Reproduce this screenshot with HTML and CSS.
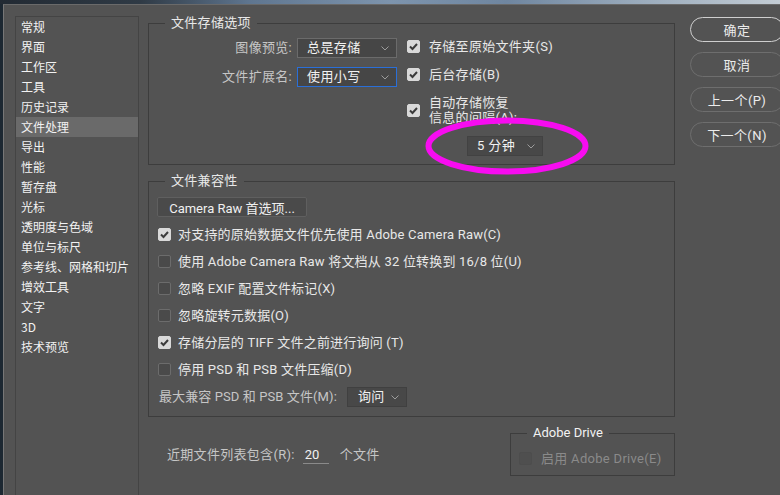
FILE: index.html
```html
<!DOCTYPE html>
<html lang="zh-CN">
<head>
    <meta charset="UTF-8" />
    <title>首选项 - 文件处理</title>
    <link rel="stylesheet" href="styles.css">
</head>
<body>
<div class="wallpaper"></div>
<div class="dialog">
    <ul class="nav">
        <li>常规</li>
        <li>界面</li>
        <li>工作区</li>
        <li>工具</li>
        <li>历史记录</li>
        <li class="active">文件处理</li>
        <li>导出</li>
        <li>性能</li>
        <li>暂存盘</li>
        <li>光标</li>
        <li>透明度与色域</li>
        <li>单位与标尺</li>
        <li>参考线、网格和切片</li>
        <li>增效工具</li>
        <li>文字</li>
        <li>3D</li>
        <li>技术预览</li>
    </ul>

    <div class="main">
        <fieldset class="group group-save">
            <legend>文件存储选项</legend>
            <div class="save-body">
                <div class="save-fields">
                    <span class="field-label">图像预览:</span>
                    <div class="select">
                        <span>总是存储</span>
                        <svg class="chevron" width="8" height="5" viewBox="0 0 8 5"><polyline points="0.5,0.5 4,4 7.5,0.5" /></svg>
                    </div>
                    <span class="field-label">文件扩展名:</span>
                    <div class="select focused">
                        <span>使用小写</span>
                        <svg class="chevron" width="8" height="5" viewBox="0 0 8 5"><polyline points="0.5,0.5 4,4 7.5,0.5" /></svg>
                    </div>
                </div>
                <div class="save-checks">
                    <div class="check">
                        <span class="box on"><svg width="13" height="13" viewBox="0 0 13 13"><path d="M3 6.5 5.5 9 10 4" /></svg></span>
                        <span>存储至原始文件夹(S)</span>
                    </div>
                    <div class="check">
                        <span class="box on"><svg width="13" height="13" viewBox="0 0 13 13"><path d="M3 6.5 5.5 9 10 4" /></svg></span>
                        <span>后台存储(B)</span>
                    </div>
                    <div class="check check-tall">
                        <span class="box on"><svg width="13" height="13" viewBox="0 0 13 13"><path d="M3 6.5 5.5 9 10 4" /></svg></span>
                        <span>自动存储恢复<br>信息的间隔(A):</span>
                    </div>
                    <div class="select select-interval">
                        <span>5 分钟</span>
                        <svg class="chevron" width="8" height="5" viewBox="0 0 8 5"><polyline points="0.5,0.5 4,4 7.5,0.5" /></svg>
                    </div>
                </div>
            </div>
        </fieldset>

        <fieldset class="group group-compat">
            <legend>文件兼容性</legend>
            <button class="raw-btn">Camera Raw 首选项...</button>
            <div class="compat-list">
                <div class="check">
                    <span class="box on"><svg width="13" height="13" viewBox="0 0 13 13"><path d="M3 6.5 5.5 9 10 4" /></svg></span>
                    <span>对支持的原始数据文件优先使用 Adobe Camera Raw(C)</span>
                </div>
                <div class="check">
                    <span class="box"></span>
                    <span>使用 Adobe Camera Raw 将文档从 32 位转换到 16/8 位(U)</span>
                </div>
                <div class="check">
                    <span class="box"></span>
                    <span>忽略 EXIF 配置文件标记(X)</span>
                </div>
                <div class="check">
                    <span class="box"></span>
                    <span>忽略旋转元数据(O)</span>
                </div>
                <div class="check">
                    <span class="box on"><svg width="13" height="13" viewBox="0 0 13 13"><path d="M3 6.5 5.5 9 10 4" /></svg></span>
                    <span>存储分层的 TIFF 文件之前进行询问 (T)</span>
                </div>
                <div class="check">
                    <span class="box"></span>
                    <span>停用 PSD 和 PSB 文件压缩(D)</span>
                </div>
            </div>
            <div class="compat-max">
                <span class="field-label">最大兼容 PSD 和 PSB 文件(M):</span>
                <div class="select select-ask">
                    <span>询问</span>
                    <svg class="chevron" width="8" height="5" viewBox="0 0 8 5"><polyline points="0.5,0.5 4,4 7.5,0.5" /></svg>
                </div>
            </div>
        </fieldset>

        <div class="bottom">
            <div class="recent">
                <span class="field-label">近期文件列表包含(R):</span>
                <span class="num-input">20</span>
                <span class="field-label">个文件</span>
            </div>
            <fieldset class="group group-drive">
                <legend>Adobe Drive</legend>
                <div class="check disabled">
                    <span class="box"></span>
                    <span>启用 Adobe Drive(E)</span>
                </div>
            </fieldset>
        </div>
    </div>

    <div class="actions">
        <button class="pill primary">确定</button>
        <button class="pill">取消</button>
        <button class="pill">上一个(P)</button>
        <button class="pill">下一个(N)</button>
    </div>
</div>

<svg class="annotation" width="170" height="66" viewBox="0 0 170 66">
    <ellipse cx="85" cy="33" rx="78.5" ry="25.5" />
</svg>
</body>
</html>
```

FILE: styles.css
```css
:root {
    --panel: #535353;
    --line: #3d3d3d;
    --text: #e8e8e8;
    --muted: #c6c6c6;
    --font: Roboto, "Noto Sans CJK SC", sans-serif;
}

body {
    margin: 0;
    height: 495px;
    overflow: hidden;
    background-color: #1d2832;
    font-family: var(--font);
    font-size: 13px;
    color: var(--text);
    position: relative;
}

.wallpaper {
    height: 4px;
    background: linear-gradient(90deg, #222a33 0%, #2f3a45 18%, #5f7690 32%, #7d94ad 50%, #6f86a0 65%, #9aabbc 82%, #c3ccd4 100%);
}

.dialog {
    margin-left: 3px;
    height: 491px;
    display: flex;
    background-color: var(--panel);
    border-left: 1px solid #777;
    border-top: 1px solid #6a6a6a;
}

.dialog > * {
    flex: none;
}

/* left category list */
.nav {
    list-style: none;
    margin: 11px 0 0 11px;
    padding: 0;
    width: 124px;
    box-sizing: border-box;
    border: 1px solid #444;
    border-bottom: none;
    font-family: "Noto Sans CJK SC", sans-serif;
    font-size: 12px;
    color: #f2f2f2;
}

.nav li {
    height: 20px;
    line-height: 20px;
    padding-left: 5px;
}

.nav li.active {
    background-color: #6a6a6a;
}

.main {
    margin-left: 9px;
    width: 527px;
    display: flex;
    flex-direction: column;
}

.group {
    margin: 0;
    padding: 0;
    min-width: 0;
    border: 1px solid var(--line);
    box-sizing: border-box;
}

.group legend {
    margin-left: 16px;
    padding: 0 6px;
    line-height: 16px;
    letter-spacing: 0.3px;
}

.group-save {
    margin-top: 10px;
    height: 150px;
}

.save-body {
    display: flex;
    padding-top: 7px;
}

.save-fields {
    width: 248px;
    display: grid;
    grid-template-columns: 1fr 100px;
    column-gap: 5px;
    row-gap: 9px;
    align-items: center;
    align-self: flex-start;
}

.field-label {
    color: var(--muted);
    text-align: right;
    letter-spacing: 0.3px;
    line-height: 16px;
}

.select {
    height: 20px;
    box-sizing: border-box;
    display: flex;
    align-items: center;
    justify-content: space-between;
    padding: 0 7px 0 9px;
    background-color: #464646;
    border: 1px solid #6b6b6b;
    color: #f2f2f2;
    letter-spacing: 0.4px;
    line-height: 16px;
}

.select.focused {
    border-color: #2a6fd8;
}

.chevron polyline {
    fill: none;
    stroke: #9c9c9c;
    stroke-width: 1;
}

.save-checks {
    margin-left: 10px;
    padding-top: 1px;
    display: flex;
    flex-direction: column;
    gap: 14px;
}

.check {
    display: flex;
    align-items: center;
    gap: 9px;
    height: 14px;
    line-height: 15px;
    letter-spacing: 0.3px;
    white-space: nowrap;
}

.check-tall {
    height: 30px;
}

.box {
    width: 13px;
    height: 13px;
    flex: none;
    box-sizing: border-box;
    border: 1px solid #6c6c6c;
    border-radius: 2px;
    background-color: #4a4a4a;
}

.box.on {
    background-color: #d9d9d9;
    border-color: #d9d9d9;
}

.box svg {
    display: block;
    margin: -1px;
}

.box path {
    fill: none;
    stroke: #3b3b3b;
    stroke-width: 2;
}

.select-interval {
    width: 76px;
    margin: -3px 0 0 60px;
    border-color: #424242;
    background-color: #484848;
}

.group-compat {
    margin-top: 8px;
    height: 244px;
    padding: 8px 0 0 8px;
}

.group-compat legend,
.group-drive legend {
    margin-left: 8px;
}

.raw-btn {
    display: block;
    width: 150px;
    height: 20px;
    padding: 0;
    font-family: var(--font);
    font-size: 13px;
    color: #f0f0f0;
    background-color: #4a4a4a;
    border: 1px solid #5f5f5f;
    border-radius: 2px;
}

.compat-list {
    margin: 10px 0 0 1px;
    display: flex;
    flex-direction: column;
    gap: 13px;
}

.compat-list .check {
    gap: 7px;
    letter-spacing: 0.2px;
}

.compat-max {
    margin: 11px 0 0 2px;
    display: flex;
    align-items: center;
    gap: 10px;
}

.compat-max .field-label {
    letter-spacing: 0.1px;
}

.select-ask {
    width: 60px;
    border-color: #404040;
    background-color: #484848;
    padding-left: 10px;
}

.bottom {
    display: flex;
    margin-top: 8px;
}

.recent {
    margin: 21px 0 0 19px;
    height: 18px;
    display: flex;
    align-items: center;
}

.num-input {
    width: 26px;
    margin: 0 11px 0 8px;
    padding-left: 2px;
    box-sizing: border-box;
    border-bottom: 1px solid #8a8a8a;
    color: #f2f2f2;
    line-height: 16px;
}

.group-drive {
    margin-left: auto;
    width: 165px;
    height: 51px;
    padding: 10px 0 0 8px;
}

.group-drive legend {
    color: #f2f2f2;
    letter-spacing: 0;
}

.check.disabled {
    color: #8a8a8a;
}

.check.disabled .box {
    border-color: #4d4d4d;
    background-color: #4f4f4f;
}

/* right buttons */
.actions {
    margin: 12px 0 0 15px;
    display: flex;
    flex-direction: column;
    gap: 10px;
}

.pill {
    width: 94px;
    height: 25px;
    padding: 0;
    background-color: var(--panel);
    border: 1px solid #6e6e6e;
    border-radius: 13px;
    font-family: var(--font);
    font-size: 13px;
    color: #ececec;
    letter-spacing: 0.4px;
}

.pill.primary {
    border-color: #cfcfcf;
}

/* hand-drawn highlight over the interval dropdown */
.annotation {
    position: absolute;
    left: 422px;
    top: 113px;
}

.annotation ellipse {
    fill: none;
    stroke: #f70cf0;
    stroke-width: 6;
}
```
